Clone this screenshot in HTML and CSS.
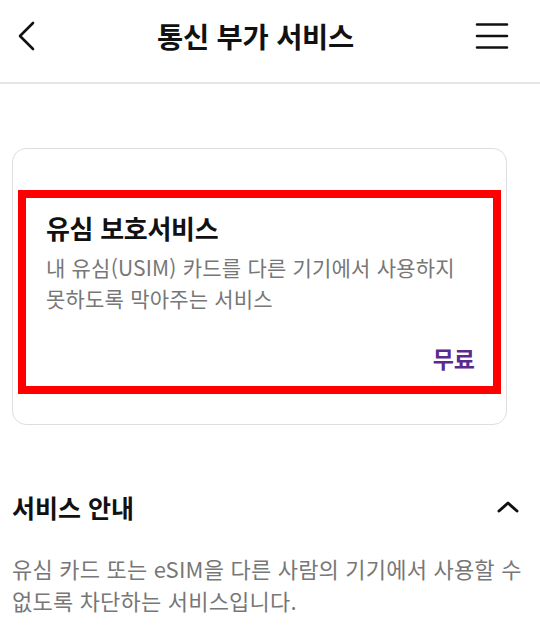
FILE: index.html
```html
<!DOCTYPE html>
<html lang="ko">
<head>
    <meta charset="UTF-8">
    <meta name="viewport" content="width=device-width, initial-scale=1.0">
    <title>통신 부가 서비스</title>
    <link rel="stylesheet" href="styles.css">
</head>
<body>

<header class="top-bar">
    <button class="icon-btn back-btn" aria-label="뒤로">
        <svg width="20" height="32" viewBox="0 0 20 32"><path d="M17 3 L4 16 L17 29" fill="none" stroke="#111" stroke-width="2.6" stroke-linecap="round" stroke-linejoin="round"/></svg>
    </button>
    <h1 class="page-title">통신 부가 서비스</h1>
    <button class="icon-btn menu-btn" aria-label="메뉴">
        <svg width="34" height="28" viewBox="0 0 34 28"><path d="M2 2.5 H32 M2 14 H32 M2 25.5 H32" fill="none" stroke="#111" stroke-width="2.6" stroke-linecap="round"/></svg>
    </button>
</header>

<main class="content">
    <div class="service-card">
        <div class="service-box">
            <h2 class="service-name">유심 보호서비스</h2>
            <p class="service-desc">내 유심(USIM) 카드를 다른 기기에서 사용하지<br>못하도록 막아주는 서비스</p>
            <div class="service-price">무료</div>
        </div>
    </div>

    <section class="guide">
        <div class="guide-head">
            <h3 class="guide-title">서비스 안내</h3>
            <svg class="guide-toggle" width="22" height="12" viewBox="0 0 22 12"><path d="M2 10 L11 2 L20 10" fill="none" stroke="#111" stroke-width="3" stroke-linecap="round" stroke-linejoin="round"/></svg>
        </div>
        <p class="guide-text">유심 카드 또는 eSIM을 다른 사람의 기기에서 사용할 수<br>없도록 차단하는 서비스입니다.</p>
    </section>
</main>

</body>
</html>
```

FILE: styles.css
```css
body {
    margin: 0;
    font-family: "Noto Sans CJK KR", "Noto Sans", sans-serif;
    background: #fff;
    color: #111;
}

.top-bar {
    height: 82px;
    display: flex;
    align-items: center;
    justify-content: space-between;
    padding: 0 31px 0 16px;
    border-bottom: 2px solid #e6e6e6;
}

.icon-btn {
    background: none;
    border: none;
    padding: 0;
    display: flex;
    cursor: pointer;
}

.back-btn {
    margin-top: -10px;
}

.menu-btn {
    margin-top: -10px;
}

.page-title {
    margin: -12px 0 0;
    font-size: 28.5px;
    font-weight: 700;
    letter-spacing: -0.3px;
}

.content {
    padding: 0 12px;
}

.service-card {
    margin: 64px 21px 0 0;
    border: 1.5px solid #dedede;
    border-radius: 14px;
    padding: 41px 5px 30px;
}

.service-box {
    border: 8px solid #ff0000;
    padding: 12px 18px 12px 20px;
}

.service-name {
    margin: 0;
    font-size: 26px;
    font-weight: 700;
    line-height: 36px;
    letter-spacing: -0.3px;
}

.service-desc {
    margin: 6px 0 0;
    font-size: 21px;
    line-height: 31px;
    color: #777;
    letter-spacing: 0.2px;
}

.service-price {
    margin-top: 28px;
    text-align: right;
    font-size: 23px;
    font-weight: 700;
    line-height: 32px;
    color: #5b2a8e;
}

.guide {
    margin-top: 62px;
}

.guide-head {
    display: flex;
    align-items: center;
    justify-content: space-between;
    padding-right: 9px;
}

.guide-title {
    margin: 0;
    font-size: 25px;
    font-weight: 700;
    line-height: 40px;
}

.guide-text {
    margin: 25px 0 0;
    font-size: 22px;
    line-height: 32px;
    color: #777;
    letter-spacing: 0.2px;
}
```
